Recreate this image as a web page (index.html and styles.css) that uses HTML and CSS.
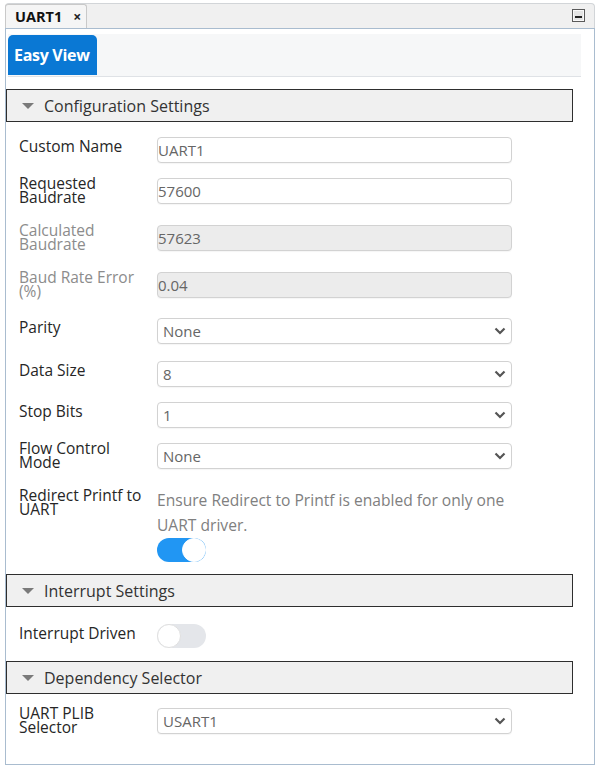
FILE: index.html
```html
<!DOCTYPE html>
<html>
<head>
<meta charset="utf-8">
<link rel="stylesheet" href="styles.css">
</head>
<body>
<div class="window">
  <div class="tabbar">
    <div class="doc-tab"><span class="doc-title">UART1</span><span class="doc-close">×</span></div>
    <svg class="minimize" width="13" height="13" viewBox="0 0 13 13">
      <rect x="0.5" y="0.5" width="12" height="12" fill="#e4e4e4" stroke="#5a5a5a"/>
      <rect x="1.5" y="1.5" width="10" height="10" fill="none" stroke="#f8f8f8"/>
      <rect x="3" y="7" width="7" height="2" fill="#222"/>
    </svg>
  </div>
  <div class="content">
    <div class="view-strip"><div class="view-tab">Easy View</div></div>

    <div class="section-header"><span class="caret"></span>Configuration Settings</div>
    <div class="section-body">
      <div class="row">
        <div class="label">Custom Name</div>
        <div class="field">UART1</div>
      </div>
      <div class="row row-two">
        <div class="label two">Requested<br>Baudrate</div>
        <div class="field">57600</div>
      </div>
      <div class="row row-two">
        <div class="label two muted">Calculated<br>Baudrate</div>
        <div class="field disabled">57623</div>
      </div>
      <div class="row row-mid">
        <div class="label two muted">Baud Rate Error<br>(%)</div>
        <div class="field disabled">0.04</div>
      </div>
      <div class="row row-loose">
        <div class="label">Parity</div>
        <div class="field select"><span>None</span><svg class="chev" width="12" height="8" viewBox="0 0 12 8"><polyline points="1.5,1.5 6,6 10.5,1.5" fill="none" stroke="#555" stroke-width="2.2"/></svg></div>
      </div>
      <div class="row">
        <div class="label">Data Size</div>
        <div class="field select"><span>8</span><svg class="chev" width="12" height="8" viewBox="0 0 12 8"><polyline points="1.5,1.5 6,6 10.5,1.5" fill="none" stroke="#555" stroke-width="2.2"/></svg></div>
      </div>
      <div class="row">
        <div class="label">Stop Bits</div>
        <div class="field select"><span>1</span><svg class="chev" width="12" height="8" viewBox="0 0 12 8"><polyline points="1.5,1.5 6,6 10.5,1.5" fill="none" stroke="#555" stroke-width="2.2"/></svg></div>
      </div>
      <div class="row row-two">
        <div class="label two">Flow Control<br>Mode</div>
        <div class="field select"><span>None</span><svg class="chev" width="12" height="8" viewBox="0 0 12 8"><polyline points="1.5,1.5 6,6 10.5,1.5" fill="none" stroke="#555" stroke-width="2.2"/></svg></div>
      </div>
      <div class="row row-last">
        <div class="label two">Redirect Printf to<br>UART</div>
        <div class="control">
          <div class="help">Ensure Redirect to Printf is enabled for only one UART driver.</div>
          <div class="toggle on"><span class="knob"></span></div>
        </div>
      </div>
    </div>

    <div class="section-header"><span class="caret"></span>Interrupt Settings</div>
    <div class="section-body body-short">
      <div class="row row-last">
        <div class="label">Interrupt Driven</div>
        <div class="control"><div class="toggle"><span class="knob"></span></div></div>
      </div>
    </div>

    <div class="section-header"><span class="caret"></span>Dependency Selector</div>
    <div class="section-body body-end">
      <div class="row row-last">
        <div class="label two">UART PLIB<br>Selector</div>
        <div class="field select"><span>USART1</span><svg class="chev" width="12" height="8" viewBox="0 0 12 8"><polyline points="1.5,1.5 6,6 10.5,1.5" fill="none" stroke="#555" stroke-width="2.2"/></svg></div>
      </div>
    </div>
  </div>
</div>
</body>
</html>
```

FILE: styles.css
```css
* { box-sizing: border-box; }
html, body { margin: 0; padding: 0; }
body {
  background: #ffffff;
  font-family: "Open Sans", "Noto Sans", sans-serif;
  color: #2a2a2a;
  width: 598px;
  height: 769px;
  overflow: hidden;
}
.window {
  margin: 3px 3px 0 5px;
  height: 762px;
  display: flex;
  flex-direction: column;
}
.tabbar {
  height: 25px;
  background: #f0f0f0;
  border: 1px solid #d2d5d8;
  border-bottom: none;
  border-radius: 4px 4px 0 0;
  display: flex;
  align-items: flex-end;
  justify-content: space-between;
  padding: 0 9px 0 0;
  flex: none;
}
.doc-tab {
  height: 24px;
  width: 82px;
  background: #f5f5f5;
  border: 1px solid #c9c9c9;
  border-bottom: none;
  border-radius: 3px 3px 0 0;
  display: flex;
  align-items: center;
  padding-left: 9px;
  margin-left: -1px;
}
.doc-title {
  font-weight: 700;
  font-size: 14.5px;
  color: #111;
}
.doc-close {
  font-weight: 700;
  font-size: 14px;
  margin-left: 11px;
  color: #222;
}
.minimize {
  align-self: center;
  margin-top: -2px;
}
.content {
  flex: 1;
  border: 1px solid #a9bccf;
  background: #fff;
}
.view-strip {
  margin: 5px 13px 0 2px;
  height: 43px;
  background: #f6f7f8;
  border-bottom: 1px solid #dfe2e6;
  padding-top: 1px;
}
.view-tab {
  width: 89px;
  height: 40px;
  background: #0a78d4;
  border-radius: 5px 5px 0 0;
  color: #fff;
  font-weight: 700;
  font-size: 16px;
  line-height: 40px;
  padding-left: 6px;
  letter-spacing: -0.3px;
}
.section-header {
  margin: 12px 0 0 0;
  width: 567px;
  height: 33px;
  border: 1px solid #2e2e2e;
  background: #f0f0f0;
  display: flex;
  align-items: center;
  font-size: 16px;
  color: #333;
  padding-left: 15px;
}
.section-body + .section-header { margin-top: 0; }
.caret {
  width: 0;
  height: 0;
  border-left: 6px solid transparent;
  border-right: 6px solid transparent;
  border-top: 6px solid #7a7a7a;
  margin-right: 10px;
  margin-top: 1px;
}
.section-body {
  padding: 15px 0 12px 13px;
}
.body-short { padding: 17px 0 13px 13px; }
.body-end { padding: 14px 0 0 13px; }
.row {
  display: grid;
  grid-template-columns: 138px 355px;
  align-items: start;
  margin-bottom: 15px;
}
.row-two { margin-bottom: 21px; }
.row-mid { margin-bottom: 20px; }
.row-loose { margin-bottom: 17px; }
.row-last { margin-bottom: 0; }
.label {
  font-size: 15.5px;
  line-height: 14px;
  padding-top: 2px;
  color: #262626;
}
.label.two { margin-top: -2px; padding-top: 0; }
.label.muted { color: #8c8c8c; }
.field {
  height: 26px;
  border: 1px solid #d2d2d2;
  border-radius: 4px;
  background: #fff;
  font-size: 15px;
  line-height: 24px;
  color: #666;
  padding-left: 0;
  box-shadow: 0 1px 1px rgba(0,0,0,0.04);
}
.field.disabled { background: #ececec; }
.field.select {
  display: flex;
  align-items: center;
  justify-content: space-between;
  padding: 0 5px 0 5px;
}
.chev { flex: none; }
.control { margin-top: -2px; }
.help {
  font-size: 15.6px;
  line-height: 25px;
  color: #808080;
  width: 355px;
}
.toggle {
  width: 49px;
  height: 24px;
  border-radius: 12px;
  background: #e4e6ea;
  position: relative;
}
.toggle .knob {
  position: absolute;
  top: 0;
  left: 0;
  width: 24px;
  height: 24px;
  border-radius: 50%;
  background: #fff;
  border: 1px solid #e0e0e0;
}
.toggle.on { background: #2196f3; }
.toggle.on .knob { left: 25px; border-color: #fff; }
.body-short .control { margin-top: 0; }
```
